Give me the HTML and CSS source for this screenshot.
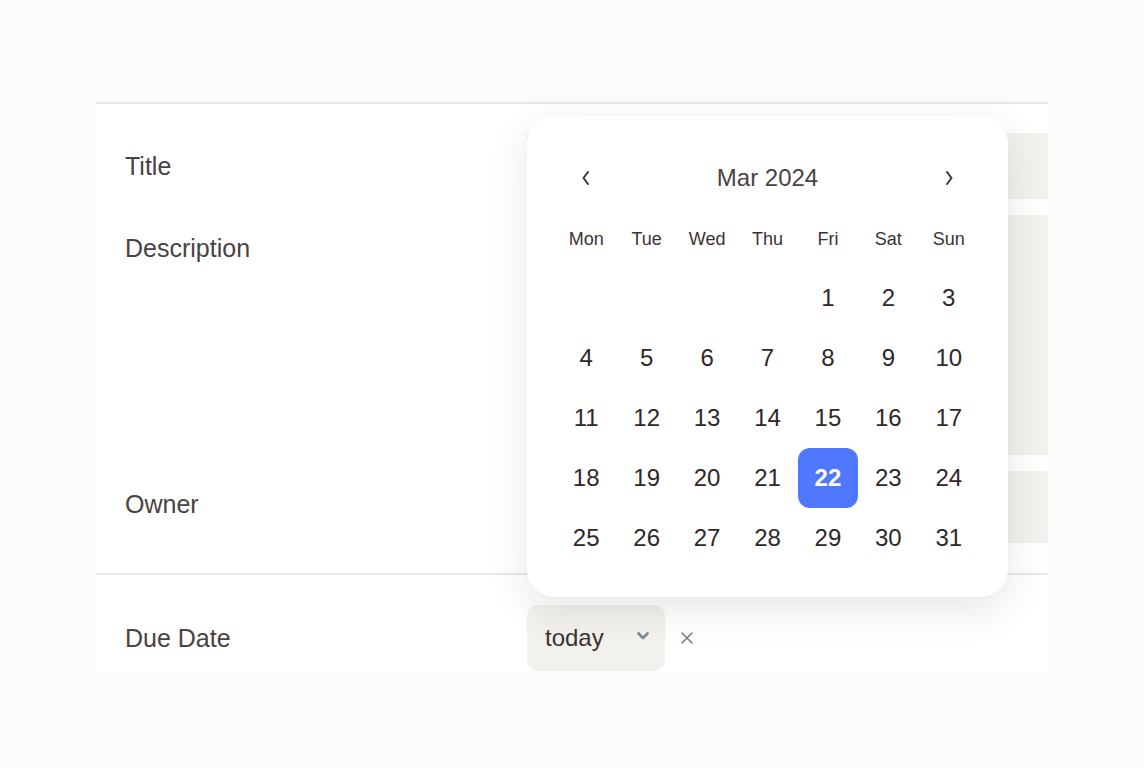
FILE: index.html
```html
<!doctype html>
<html lang="en">
    <head>
        <title>Task</title>
        <link rel="stylesheet" href="styles.css">
    </head>
    <body>
        <div class="pagina">
            <div class="pannello">
                <div class="sezione">
                    <div class="riga">
                        <div class="etichetta">Title</div>
                        <div class="campo titolo"></div>
                    </div>
                    <div class="riga">
                        <div class="etichetta">Description</div>
                        <div class="campo descrizione"></div>
                    </div>
                    <div class="riga">
                        <div class="etichetta">Owner</div>
                        <div class="campo proprietario"></div>
                    </div>
                </div>
                <div class="sezione scadenza">
                    <div class="riga">
                        <div class="etichetta">Due Date</div>
                        <div class="data">
                            <div class="selettore">
                                <span>today</span>
                                <svg width="12" height="8" viewBox="0 0 12 8"><path d="M1.5 1.5 L6 6 L10.5 1.5" fill="none" stroke="#7b8797" stroke-width="2.6" stroke-linecap="round" stroke-linejoin="round"/></svg>
                            </div>
                            <svg class="chiudi" width="12" height="12" viewBox="0 0 12 12"><path d="M1 1 L11 11 M11 1 L1 11" fill="none" stroke="#7a7878" stroke-width="1.5" stroke-linecap="round"/></svg>
                        </div>
                    </div>
                    <div class="calendario">
                        <div class="intestazione">
                            <div class="freccia">
                                <svg width="10" height="16" viewBox="0 0 10 16"><path d="M7 2 L2.5 8 L7 14" fill="none" stroke="#3b3335" stroke-width="2" stroke-linecap="round" stroke-linejoin="round"/></svg>
                            </div>
                            <div class="mese">Mar 2024</div>
                            <div class="freccia">
                                <svg width="10" height="16" viewBox="0 0 10 16"><path d="M3 2 L7.5 8 L3 14" fill="none" stroke="#3b3335" stroke-width="2" stroke-linecap="round" stroke-linejoin="round"/></svg>
                            </div>
                        </div>
                        <div class="griglia">
                            <div class="giorno-sett">Mon</div>
                            <div class="giorno-sett">Tue</div>
                            <div class="giorno-sett">Wed</div>
                            <div class="giorno-sett">Thu</div>
                            <div class="giorno-sett">Fri</div>
                            <div class="giorno-sett">Sat</div>
                            <div class="giorno-sett">Sun</div>
                            <div></div><div></div><div></div><div></div>
                            <div class="giorno">1</div>
                            <div class="giorno">2</div>
                            <div class="giorno">3</div>
                            <div class="giorno">4</div>
                            <div class="giorno">5</div>
                            <div class="giorno">6</div>
                            <div class="giorno">7</div>
                            <div class="giorno">8</div>
                            <div class="giorno">9</div>
                            <div class="giorno">10</div>
                            <div class="giorno">11</div>
                            <div class="giorno">12</div>
                            <div class="giorno">13</div>
                            <div class="giorno">14</div>
                            <div class="giorno">15</div>
                            <div class="giorno">16</div>
                            <div class="giorno">17</div>
                            <div class="giorno">18</div>
                            <div class="giorno">19</div>
                            <div class="giorno">20</div>
                            <div class="giorno">21</div>
                            <div class="giorno scelto">22</div>
                            <div class="giorno">23</div>
                            <div class="giorno">24</div>
                            <div class="giorno">25</div>
                            <div class="giorno">26</div>
                            <div class="giorno">27</div>
                            <div class="giorno">28</div>
                            <div class="giorno">29</div>
                            <div class="giorno">30</div>
                            <div class="giorno">31</div>
                        </div>
                    </div>
                </div>
            </div>
        </div>
    </body>
</html>
```

FILE: styles.css
```css
body{
    margin: 0;
    background: #fbfbfb;
    font-family: "Liberation Sans", Arial, sans-serif;
    color: #3b3335;
}
.pagina{
    padding: 102px 96px 0 96px;
}
.pannello{
    background: #ffffff;
    border-top: 2px solid #e7e6e1;
}
.sezione{
    padding: 29px 0 30px 0;
    display: flex;
    flex-direction: column;
    gap: 16px;
}
.riga{
    display: flex;
}
.etichetta{
    width: 402px;
    padding-left: 29px;
    height: 66px;
    line-height: 66px;
    font-size: 25px;
    color: #4a4244;
}
.campo{
    flex: 1;
    background: #f2f1ec;
}
.titolo{
    height: 66px;
}
.descrizione{
    height: 240px;
}
.proprietario{
    height: 72px;
}
.scadenza{
    position: relative;
    border-top: 2px solid #e7e6e1;
    padding: 30px 0 1px 0;
}
.data{
    display: flex;
    align-items: center;
    gap: 16px;
}
.selettore{
    width: 138px;
    height: 66px;
    box-sizing: border-box;
    padding: 0 16px 0 18px;
    background: #f2f1ec;
    border-radius: 11px;
    display: flex;
    align-items: center;
    justify-content: space-between;
    font-size: 24px;
    color: #3b3335;
}
.selettore svg{
    margin-bottom: 4px;
}
.calendario{
    position: absolute;
    left: 431px;
    bottom: 75px;
    width: 481px;
    box-sizing: border-box;
    padding: 32px 29px 29px 29px;
    background: #ffffff;
    border-radius: 28px;
    box-shadow: 0 12px 40px rgba(0, 0, 0, 0.1);
}
.intestazione{
    height: 60px;
    display: grid;
    grid-template-columns: 60px 1fr 60px;
    align-items: center;
}
.freccia{
    display: flex;
    justify-content: center;
}
.mese{
    text-align: center;
    font-size: 24px;
    color: #4a4244;
}
.griglia{
    display: grid;
    grid-template-columns: repeat(7, 1fr);
    grid-auto-rows: 60px;
}
.giorno-sett{
    display: flex;
    align-items: center;
    justify-content: center;
    font-size: 18px;
    padding-top: 2px;
}
.giorno{
    display: flex;
    align-items: center;
    justify-content: center;
    font-size: 24px;
    color: #2f2729;
}
.scelto{
    background: #4f78fe;
    color: #ffffff;
    font-weight: bold;
    border-radius: 12px;
}
```
